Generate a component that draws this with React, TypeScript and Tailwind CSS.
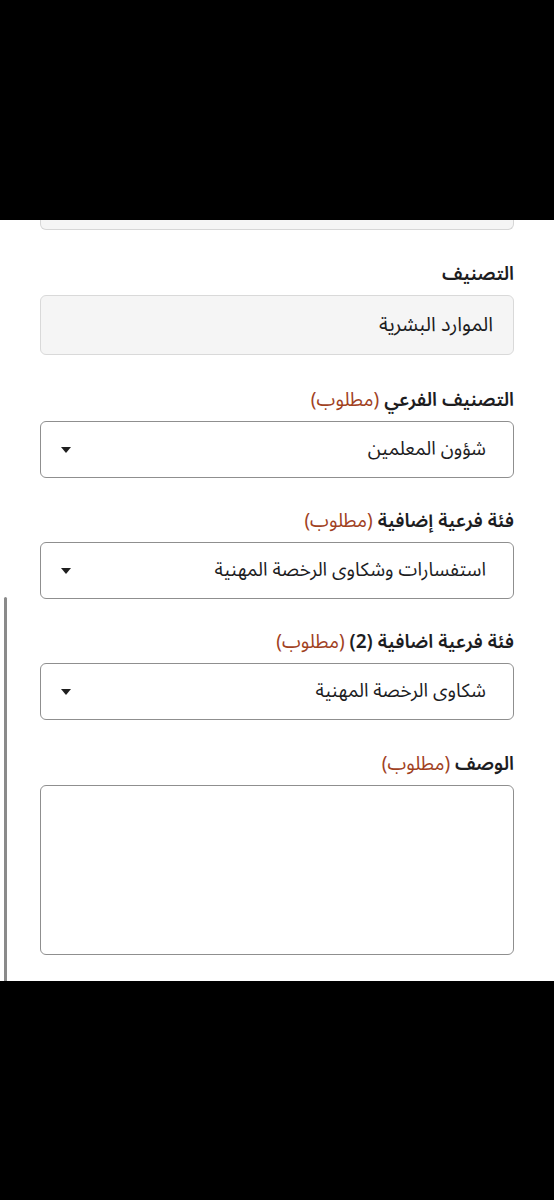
import React from "react";

const font = { fontFamily: '"Noto Sans Arabic", "Noto Sans", "DejaVu Sans", sans-serif' };

function Required() {
  return <span className="font-normal text-[#a1421f]">(مطلوب)</span>;
}

function Label({ children }: { children: React.ReactNode }) {
  return (
    <div className="mb-[8px] h-[26px] text-[19px] leading-[26px] font-semibold text-[#1d1d1f]">
      {children}
    </div>
  );
}

function Caret() {
  return (
    <svg width="10" height="6" viewBox="0 0 10 6" className="shrink-0">
      <polygon points="0,0 10,0 5,6" fill="#1f1f1f" />
    </svg>
  );
}

function Select({ value }: { value: string }) {
  return (
    <div className="flex h-[57px] items-center justify-between rounded-[6px] border border-[#8f8f8f] bg-white pr-[27px] pl-[20px]">
      <span className="text-[19px] text-[#1d1d1f]">{value}</span>
      <Caret />
    </div>
  );
}

export default function App() {
  return (
    <div dir="rtl" className="flex h-[1200px] flex-col bg-black" style={font}>
      <div className="h-[220px] shrink-0 bg-black" />
      <div className="relative h-[761px] shrink-0 overflow-hidden bg-white px-[40px]">
        <div className="h-[10px] rounded-b-[6px] border border-t-0 border-[#d6d6d6] bg-[#f5f5f5]" />

        <div className="mt-[31px]">
          <Label>التصنيف</Label>
          <div className="flex h-[60px] items-center rounded-[6px] border border-[#d9d9d9] bg-[#f5f5f5] pr-[20px]">
            <span className="text-[20px] text-[#1d1d1f]">الموارد البشرية</span>
          </div>
        </div>

        <div className="mt-[32px]">
          <Label>
            التصنيف الفرعي <Required />
          </Label>
          <Select value="شؤون المعلمين" />
        </div>

        <div className="mt-[30px]">
          <Label>
            فئة فرعية إضافية <Required />
          </Label>
          <Select value="استفسارات وشكاوى الرخصة المهنية" />
        </div>

        <div className="mt-[30px]">
          <Label>
            فئة فرعية اضافية (2) <Required />
          </Label>
          <Select value="شكاوى الرخصة المهنية" />
        </div>

        <div className="mt-[31px]">
          <Label>
            الوصف <Required />
          </Label>
          <div className="h-[170px] rounded-[6px] border border-[#8f8f8f] bg-white" />
        </div>

        <div className="absolute top-[377px] left-[4px] h-[384px] w-[3px] rounded-t-full bg-[#8a8a8a]" />
      </div>
      <div className="flex-1 bg-black" />
    </div>
  );
}
